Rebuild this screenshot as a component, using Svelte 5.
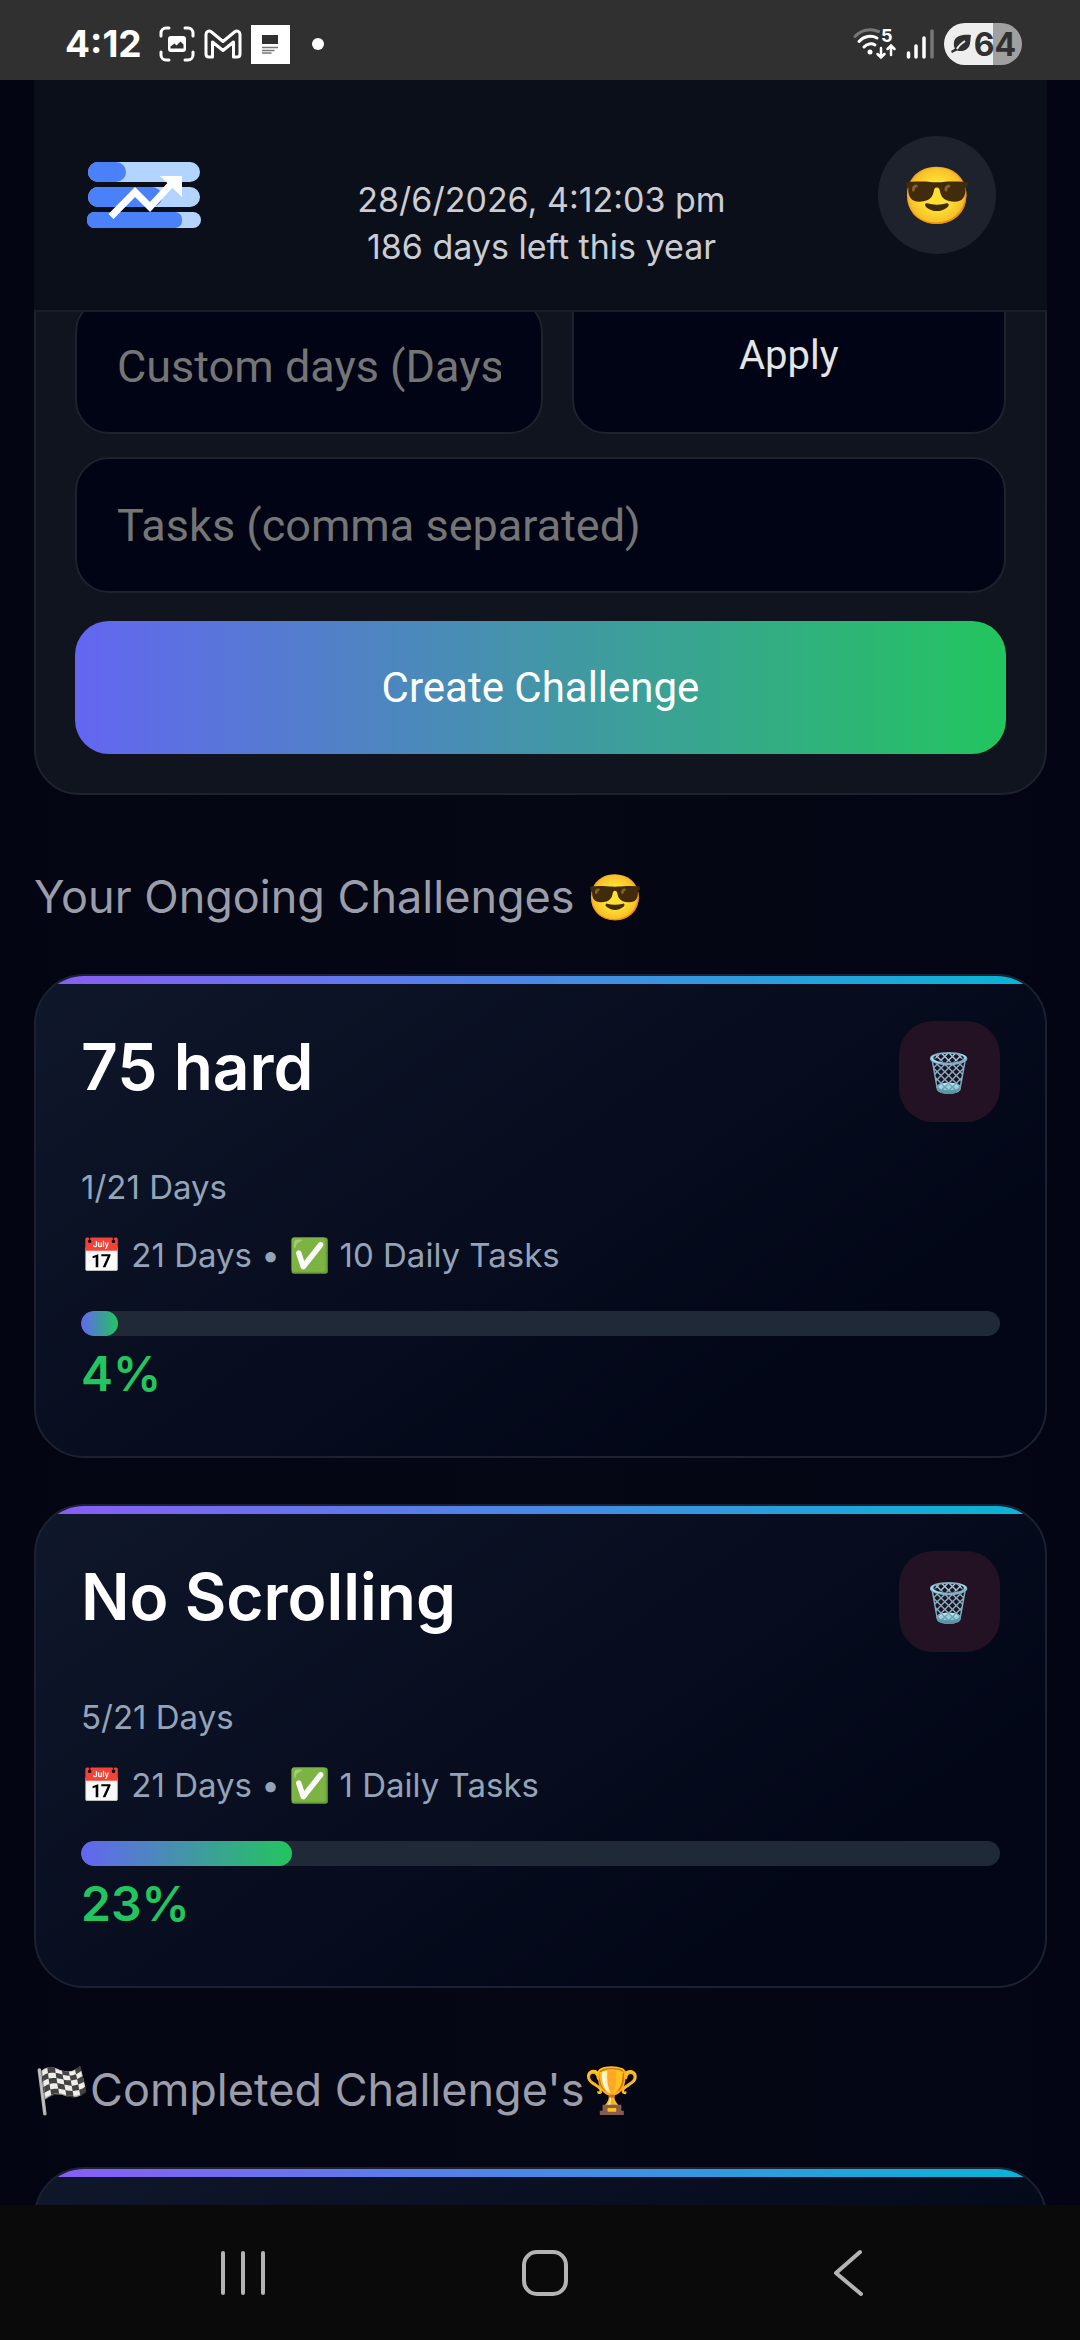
<script lang="ts">
  type Challenge = {
    title: string;
    done: number;
    total: number;
    tasks: number;
    percent: number;
  };

  const ongoing: Challenge[] = [
    { title: '75 hard', done: 1, total: 21, tasks: 10, percent: 4 },
    { title: 'No Scrolling', done: 5, total: 21, tasks: 1, percent: 23 },
  ];

  let customDays = $state('');
  let tasks = $state('');
</script>

<div class="screen">
  <div class="status-bar">
    <div class="status-left">
      <span class="clock">4:12</span>
      <svg width="36" height="36" viewBox="0 0 36 36" fill="none" stroke="#fff" stroke-width="3" stroke-linecap="round">
        <path d="M2 10V7a5 5 0 0 1 5-5h3M26 2h3a5 5 0 0 1 5 5v3M34 26v3a5 5 0 0 1-5 5h-3M10 34H7a5 5 0 0 1-5-5v-3" />
        <rect x="9" y="10" width="18" height="16" rx="3" fill="#fff" stroke="none" />
        <path d="M11.500 22.500v-2l4-3 2 2 4-4 3 3v4z" fill="#303030" stroke="none" />
      </svg>
      <svg width="38" height="30" viewBox="0 0 38 30" fill="none" stroke="#fff" stroke-width="3" stroke-linejoin="round">
        <path d="M2 5.500C2 2.500 5 1 7.500 3L19 12.500 30.500 3C33 1 36 2.500 36 5.500V25q0 3-3 3h-3.500V13L19 21.500 8.500 13v15H5q-3 0-3-3z" />
      </svg>
      <svg width="39" height="39" viewBox="0 0 39 39">
        <path d="M0 0h39v39H0z" fill="#fff" />
        <path d="M11 10h16v9H11z" fill="#303030" />
        <path d="M11 22.500h16M11 25.500h12.500M11 28h9.500" stroke="#777" stroke-width="1.500" />
      </svg>
      <span class="dot"></span>
    </div>
    <div class="status-right">
      <svg width="44" height="54" viewBox="0 -10 44 54" fill="none" stroke-linecap="round" stroke-width="3">
        <path d="M2 9.500C8 3 17 1 25.500 4.500" stroke="#777" />
        <path d="M6 14.500c5-5.500 12.500-6.500 18-3.500M11 20c3-3.500 8-4 11-2" stroke="#fff" />
        <circle cx="17" cy="25" r="2.500" fill="#fff" />
        <path d="M28 21v9.500m-3.500-3.500 3.500 3.500 3.500-3.500M38 28v-9.500m-3.500 3.500 3.500-3.500 3.500 3.500" stroke="#fff" stroke-width="2.500" />
        <text x="28" y="15" fill="#fff">5</text>
      </svg>
      <svg width="29" height="30" viewBox="0 0 29 30" stroke-width="3.500" stroke-linecap="round">
        <path d="M2.500 24v4M10 17v11M18 9v19" stroke="#fff" />
        <path d="M26 2v26" stroke="#777" />
      </svg>
      <div class="battery">
        <svg width="22" height="20" viewBox="0 0 22 20">
          <path d="M21 1C12 0 5 2 4 8c-.5 3 0 5 1 6.500L1 17l1 2 5-2.500c6 2 12-1 13-7 .5-3 .5-6 1-8.500z" fill="#303030" />
          <path d="M7 15c2-4 5-6 8-8" fill="none" stroke="#eee" stroke-width="2" />
        </svg>
        <span>64</span>
      </div>
    </div>
  </div>

  <main>
    <header>
      <svg class="logo" width="114" height="66" viewBox="0 0 114 66">
        <rect x="1" y="0" width="112" height="20" rx="10" fill="#b3d4ff" />
        <path d="M11 0h18a10 10 0 0 1 0 20H11a10 10 0 0 1 0-20z" fill="#4a80f8" />
        <rect x="1" y="25" width="112" height="20" rx="10" fill="#b3d4ff" />
        <path d="M11 25h54a10 10 0 0 1 0 20H11a10 10 0 0 1 0-20z" fill="#4a80f8" />
        <rect x="0" y="50" width="114" height="16" rx="8" fill="#b3d4ff" />
        <rect x="0" y="50" width="95" height="16" rx="7" fill="#4a80f8" />
        <path d="M24 54.500 48 30 63 45 86 20" fill="none" stroke="#fff" stroke-width="7" />
        <path d="M73 14h22v21z" fill="#fff" />
      </svg>
      <div class="date">
        <div>28/6/2026, 4:12:03 pm</div>
        <div>186 days left this year</div>
      </div>
      <button class="avatar" aria-label="Profile">😎</button>
    </header>

    <form onsubmit={(e) => e.preventDefault()}>
      <div class="custom-row">
        <input type="text" aria-label="Custom days" placeholder="Custom days (Days)" bind:value={customDays} />
        <button type="button" class="apply">Apply</button>
      </div>
      <input type="text" aria-label="Tasks" placeholder="Tasks (comma separated)" bind:value={tasks} />
      <button type="submit" class="create">Create Challenge</button>
    </form>

    <h2>Your Ongoing Challenges 😎</h2>
    <div class="cards">
      {#each ongoing as c (c.title)}
        <article class="card">
          <div class="card-head">
            <h3>{c.title}</h3>
            <button class="delete" aria-label="Delete {c.title}">🗑️</button>
          </div>
          <p>{c.done}/{c.total} Days</p>
          <p>📅 {c.total} Days • ✅ {c.tasks} Daily Tasks</p>
          <div class="track" role="progressbar" aria-label={c.title} aria-valuenow={c.percent} aria-valuemin="0" aria-valuemax="100">
            <div class="fill" style="width: {c.percent}%"></div>
          </div>
          <div class="percent">{c.percent}%</div>
        </article>
      {/each}
    </div>

    <h2>🏁Completed Challenge's🏆</h2>
    <article class="card"></article>
  </main>

  <nav>
    <button aria-label="Recent apps">
      <svg width="48" height="48" viewBox="0 0 48 48"><path d="M4 4v40M24 4v40M44 4v40" /></svg>
    </button>
    <button aria-label="Home">
      <svg width="48" height="48" viewBox="0 0 48 48"><rect x="3" y="3" width="42" height="42" rx="13" /></svg>
    </button>
    <button aria-label="Back">
      <svg width="48" height="48" viewBox="0 0 48 48"><path d="M36 3 12 24l25 21" /></svg>
    </button>
  </nav>
</div>

<style>
  :global(body) { margin: 0; background: #030613; }
  * { box-sizing: border-box; }
  .screen {
    height: 100vh; overflow: hidden;
    display: flex; flex-direction: column;
    background: linear-gradient(90deg, #030512, #050714 50%, #030514);
    font-family: Inter, 'Noto Color Emoji', sans-serif;
  }
  button { padding: 0; border: none; background: none; cursor: pointer; }

  .status-bar {
    flex: none; height: 80px; padding: 0 58px 0 65px;
    display: flex; align-items: center; justify-content: space-between;
    background: #303030; color: #fff;
  }
  .status-left { display: flex; align-items: center; gap: 9px; padding-top: 8px; }
  .clock { font-size: 37px; line-height: 40px; font-weight: 700; margin-right: 8px; }
  .dot { width: 12px; height: 12px; border-radius: 50%; background: #fff; margin-left: 13px; }
  .status-right { display: flex; align-items: center; gap: 9px; padding-top: 8px; }
  .status-right text { font: 700 18px Inter, sans-serif; }
  .battery {
    width: 78px; height: 42px; border-radius: 21px;
    display: flex; align-items: center; justify-content: center; gap: 2px;
    background: linear-gradient(90deg, #eee 63%, #a0a0a0 63%);
    color: #303030; font-size: 32px; font-weight: 700;
  }

  main { flex: 1; min-height: 0; overflow: hidden; padding: 0 33px 0 34px; }
  header {
    position: sticky; top: 0; z-index: 1;
    display: grid; grid-template-columns: 1fr auto 1fr; align-items: center;
    padding: 40px 51px 40px 53px;
    background: #0b0f19; border-bottom: 2px solid #191d28;
  }
  .date { padding-top: 56px; font-size: 34px; line-height: 47px; text-align: center; color: #cbcdd3; }
  .avatar {
    justify-self: end; width: 118px; height: 118px; border-radius: 50%;
    background: #1e222c; font-family: inherit; font-size: 56px;
  }

  form {
    display: flex; flex-direction: column; gap: 23px;
    margin-top: -76px; padding: 39px;
    background: #10141e; border: 2px solid #1e222d; border-radius: 45px;
  }
  .custom-row { display: grid; grid-template-columns: 467fr 434fr; gap: 29px; align-items: end; }
  input {
    width: 100%; min-width: 0; height: 136px; padding: 0 40px;
    background: #010414; border: 2px solid #1e222d; border-radius: 34px;
    color: #fff; font-family: Roboto, sans-serif; font-size: 45px;
  }
  input::placeholder { color: #757575; opacity: 1; }
  .apply, .create { font-family: Roboto, sans-serif; border-radius: 34px; }
  .apply {
    height: 157px; background: #010414; border: 2px solid #1e222d;
    color: #e5e5e5; font-size: 40px;
  }
  .create {
    height: 133px; margin-top: 5px; color: #fff; font-size: 42px;
    background: linear-gradient(90deg, #6366f1, #22c55e);
  }

  h2 {
    margin: 0; padding: 75px 0 50px;
    font-size: 45px; line-height: 54px; font-weight: 400; color: #9b9eaa;
  }
  .cards { display: grid; gap: 46px; }
  .card {
    position: relative; overflow: hidden; min-height: 484px; padding: 45px;
    background: linear-gradient(145deg, #0f172a, #020617 80%);
    border: 2px solid #1b2130; border-radius: 50px;
  }
  .card::before {
    content: ''; position: absolute; top: 0; left: 0; right: 0; height: 8px;
    background: linear-gradient(90deg, #8b5cf6, #06b6d4);
  }
  .card-head { display: flex; justify-content: space-between; align-items: flex-start; margin-bottom: 38px; }
  h3 { margin: 0; font-size: 64px; line-height: 92px; font-weight: 600; color: #fff; }
  .delete {
    width: 101px; height: 101px; border-radius: 34px;
    background: #231223; font-family: inherit; font-size: 38px;
  }
  p { margin: 0 0 14px; font-size: 33px; line-height: 54px; color: #94a3b8; }
  .track { height: 25px; margin-top: 29px; border-radius: 13px; background: #1f2937; overflow: hidden; }
  .fill { height: 100%; border-radius: 13px; background: linear-gradient(90deg, #6366f1, #22c55e); }
  .percent { font-size: 48px; line-height: 75px; font-weight: 600; color: #22c55e; }

  nav {
    flex: none; height: 135px; padding: 0 81px 0 92px;
    display: grid; grid-template-columns: repeat(3, 1fr);
    background: #0a0a0a;
  }
  nav svg { display: block; margin: auto; fill: none; stroke: #b4b4b4; stroke-width: 4; stroke-linecap: round; stroke-linejoin: round; }
</style>
